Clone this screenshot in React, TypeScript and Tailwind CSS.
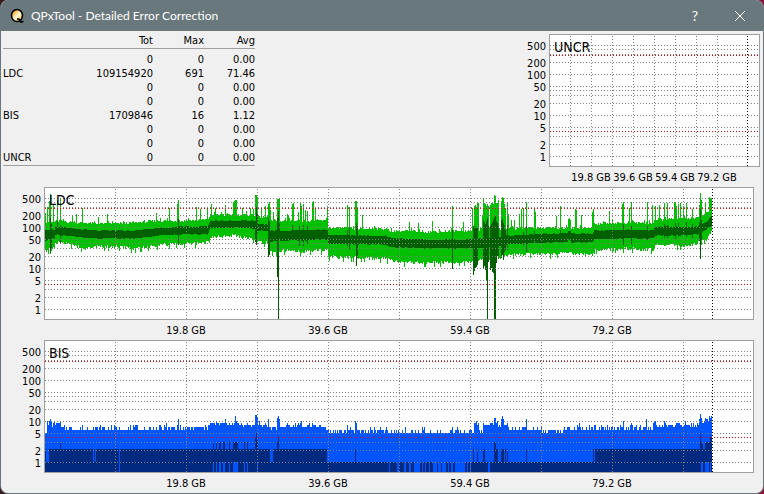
type Row = { name: string; tot: string; max: string; avg: string };

const rows: Row[] = [
  { name: "", tot: "0", max: "0", avg: "0.00" },
  { name: "LDC", tot: "109154920", max: "691", avg: "71.46" },
  { name: "", tot: "0", max: "0", avg: "0.00" },
  { name: "", tot: "0", max: "0", avg: "0.00" },
  { name: "BIS", tot: "1709846", max: "16", avg: "1.12" },
  { name: "", tot: "0", max: "0", avg: "0.00" },
  { name: "", tot: "0", max: "0", avg: "0.00" },
  { name: "UNCR", tot: "0", max: "0", avg: "0.00" },
];

const H = 131;
const SAMPLES = 667;

// one decade is 41px high
const yOf = (v: number) => Math.round(121 - 41 * Math.log10(v));

const gridValues = [500, 400, 300, 200, 100, 50, 40, 30, 20, 10, 5, 3, 2, 1];
const labels = [500, 200, 100, 50, 20, 10, 5, 2, 1];
const sizes = ["19.8 GB", "39.6 GB", "59.4 GB", "79.2 GB"];

// small repeatable noise, 0..1
const noise = (x: number, seed: number) => {
  const n = Math.sin(x * 12.9898 + seed * 78.233) * 43758.5453;
  return n - Math.floor(n);
};

// x, max top, min bottom, avg top, avg bottom
const ldcBase = [
  [0, 34, 62, 42, 52],
  [9, 34, 60, 42, 50],
  [10, 33, 54, 39, 47],
  [22, 34, 54, 40, 47],
  [38, 35, 60, 42, 49],
  [55, 36, 58, 43, 50],
  [72, 36, 58, 43, 50],
  [88, 35, 60, 43, 50],
  [98, 34, 59, 42, 49],
  [115, 33, 56, 40, 47],
  [138, 33, 55, 39, 46],
  [162, 32, 54, 39, 46],
  [165, 27, 48, 33, 40],
  [188, 27, 47, 33, 39],
  [208, 27, 50, 33, 40],
  [213, 29, 53, 36, 42],
  [222, 30, 54, 37, 43],
  [224, 33, 63, 43, 53],
  [242, 33, 62, 43, 52],
  [258, 33, 63, 42, 52],
  [282, 33, 61, 42, 51],
  [283, 40, 68, 47, 55],
  [312, 41, 69, 48, 56],
  [340, 41, 70, 48, 56],
  [344, 43, 71, 50, 59],
  [355, 43, 74, 51, 59],
  [385, 44, 74, 52, 60],
  [423, 43, 73, 52, 60],
  [435, 42, 72, 51, 60],
  [463, 41, 67, 48, 56],
  [482, 40, 65, 47, 55],
  [502, 40, 66, 46, 54],
  [519, 40, 64, 46, 54],
  [547, 40, 66, 46, 54],
  [549, 36, 61, 43, 51],
  [579, 35, 60, 42, 50],
  [608, 35, 61, 43, 50],
  [610, 32, 56, 39, 47],
  [636, 31, 57, 39, 47],
  [652, 30, 55, 39, 46],
  [656, 28, 52, 37, 45],
  [662, 25, 50, 33, 40],
  [667, 22, 42, 28, 37],
];

// x, top
const ldcPeaks = [
  [0, 25], [2, 19], [4, 13], [5, 6], [8, 17], [12, 12], [15, 10], [27, 27], [31, 26],
  [37, 20], [53, 29], [62, 26], [111, 25], [124, 20], [132, 16], [133, 12], [151, 19],
  [155, 21], [162, 19], [166, 16], [170, 20], [176, 24], [180, 17], [188, 14], [189, 13],
  [190, 12], [191, 12], [197, 20], [201, 23], [205, 20], [208, 21], [210, 7], [211, 7],
  [212, 9], [216, 20], [220, 18], [223, 16], [224, 14], [225, 22], [228, 24], [232, 11],
  [233, 11], [234, 11], [242, 26], [243, 27], [247, 16], [248, 15], [253, 24], [255, 15],
  [256, 18], [258, 16], [260, 22], [262, 23], [267, 15], [268, 13], [270, 19], [282, 18],
  [302, 17], [304, 19], [310, 13], [311, 13], [312, 20], [317, 27], [330, 39], [364, 34],
  [373, 35], [387, 33], [407, 18], [418, 34], [427, 20], [429, 18], [430, 17], [431, 19],
  [432, 15], [433, 15], [437, 27], [438, 10], [439, 15], [440, 16], [441, 18], [442, 16],
  [443, 18], [445, 17], [446, 15], [447, 15], [448, 16], [449, 7], [450, 8], [451, 15],
  [452, 15], [453, 12], [456, 13], [457, 9], [458, 10], [459, 16], [460, 20], [462, 15],
  [463, 26], [466, 32], [469, 32], [474, 26], [476, 21], [478, 20], [481, 14], [489, 20],
  [490, 24], [511, 28], [515, 18], [523, 31], [524, 30], [525, 32], [530, 21], [531, 22],
  [536, 27], [547, 24], [548, 21], [564, 23], [577, 16], [578, 14], [584, 20], [586, 14],
  [602, 14], [607, 17], [610, 18], [614, 17], [619, 15], [622, 15], [629, 14], [630, 14],
  [631, 18], [633, 16], [635, 15], [638, 18], [641, 15], [647, 21], [654, 17], [655, 5],
  [656, 12], [660, 15], [664, 9], [665, 10], [666, 11],
];

// x, avg top, avg bottom
const ldcAvgPeaks = [
  [5, 30, 65], [6, 36, 60], [12, 33, 46], [15, 37, 55], [133, 31, 57], [210, 33, 54],
  [211, 19, 57], [212, 25, 45], [223, 30, 69], [224, 33, 67], [232, 30, 89],
  [233, 23, 131], [234, 35, 52], [247, 37, 52], [254, 38, 58], [258, 37, 58],
  [262, 38, 56], [302, 42, 58], [304, 40, 61], [311, 35, 78], [312, 38, 70],
  [407, 42, 81], [428, 38, 87], [429, 38, 83], [430, 40, 80], [431, 40, 79],
  [432, 40, 77], [438, 32, 80], [439, 34, 78], [440, 36, 82], [441, 33, 92],
  [442, 30, 131], [443, 38, 74], [445, 38, 82], [446, 36, 80], [447, 34, 84],
  [448, 31, 85], [449, 29, 131], [450, 28, 131], [451, 33, 75], [452, 35, 68],
  [453, 38, 70], [456, 32, 70], [457, 31, 67], [458, 35, 72], [459, 37, 64],
  [460, 42, 62], [462, 37, 62], [478, 44, 58], [481, 38, 64], [489, 43, 53],
  [515, 42, 54], [523, 43, 51], [524, 43, 52], [525, 43, 53], [578, 36, 57],
  [586, 38, 56], [602, 38, 52], [619, 36, 50], [622, 37, 50], [630, 35, 51],
  [633, 35, 49], [641, 34, 49], [647, 36, 50], [654, 35, 53], [655, 21, 71],
  [656, 32, 52],
];

const rect = (x: number, top: number, bottom: number) =>
  `M${x} ${top}h1V${bottom}h-1z`;

const buildLdc = () => {
  let light = "";
  let dark = "";
  const peaks = new Map(ldcPeaks.map(([x, y]) => [x, y]));
  const avgs = new Map(ldcAvgPeaks.map(([x, a, b]) => [x, [a, b]]));
  let k = 0;
  for (let x = 0; x < SAMPLES; x++) {
    while (ldcBase[k + 1][0] < x) k++;
    const p = ldcBase[k];
    const q = ldcBase[k + 1];
    const t = (x - p[0]) / (q[0] - p[0]);
    const at = (i: number) => p[i] + (q[i] - p[i]) * t;
    const up = noise(x, 1) > 0.95 ? 4 : noise(x, 2) * 2.6;
    const down = noise(x, 3) > 0.9 ? 5 : noise(x, 4) * 3.4 - 1;
    const top = peaks.get(x) ?? Math.round(at(1) + 1 - up);
    const avg = avgs.get(x) ?? [
      Math.round(at(3) - noise(x >> 1, 5) * 0.8),
      Math.round(at(4) + noise(x >> 1, 6) * 0.8),
    ];
    light += rect(x, top, Math.round(at(2) + down));
    dark += rect(x, avg[0], avg[1]);
  }
  return { light, dark };
};

// from x, usual value
const bisBase = [
  [0, 6], [3, 8], [16, 6.8], [22, 6.4], [75, 6.2], [115, 6.3], [145, 6.8], [163, 8.6],
  [197, 8], [212, 7.8], [222, 6.8], [240, 7.3], [276, 6.7], [283, 5.4], [300, 5.6],
  [343, 5.3], [365, 5.2], [425, 5.9], [430, 8], [434, 5.9], [438, 8.2], [445, 9],
  [453, 7], [463, 6.3], [497, 5.7], [523, 6.2], [575, 6.6], [608, 7.5], [648, 7.6],
  [652, 8.8], [660, 10.2],
];

const bisPeaks = [
  [2, 10], [4, 10], [5, 11], [6, 10], [12, 9], [13, 9], [15, 10], [91, 8], [121, 9],
  [132, 8], [133, 11], [171, 10], [180, 11], [190, 13], [191, 10], [210, 14], [211, 14],
  [212, 12], [214, 10], [223, 11], [232, 12], [233, 13], [234, 11], [242, 9], [255, 9],
  [256, 10], [267, 9], [302, 8], [310, 10], [311, 9], [407, 7], [429, 9], [430, 9],
  [449, 12], [450, 12], [456, 11], [457, 13], [458, 11], [462, 9], [481, 11],
  [534, 9], [578, 10], [586, 9], [601, 11], [609, 10], [610, 10], [619, 10], [640, 10],
  [654, 11], [655, 15], [656, 12], [660, 12], [664, 13], [665, 12], [666, 13],
];

// columns where the average reaches 3 and above
const bisHigh = [
  [15, 101], [168, 101], [171, 101], [174, 101], [175, 101], [178, 101], [179, 101],
  [184, 101], [188, 101], [189, 101], [190, 101], [191, 101], [192, 101], [199, 101],
  [202, 101], [210, 97], [211, 92], [212, 99], [232, 101], [233, 96], [310, 108],
  [428, 108], [432, 108], [438, 108], [439, 108], [449, 101], [450, 101], [451, 108],
  [452, 108], [456, 108], [457, 108], [458, 108], [460, 108], [462, 108], [481, 108],
  [655, 92], [656, 101], [657, 103], [660, 101], [661, 101], [662, 101], [663, 101],
  [664, 101], [665, 96], [666, 97],
];

// x, y, width, height of gaps in the average bars
const bisGaps = [
  [1, 108, 3, 13], [48, 108, 1, 13], [50, 108, 1, 13], [74, 108, 1, 23],
  [168, 121, 1, 10], [171, 121, 1, 10], [174, 121, 2, 10], [178, 121, 2, 10],
  [184, 121, 1, 10], [188, 121, 5, 10], [199, 121, 1, 10], [202, 121, 1, 10],
  [212, 121, 1, 10], [225, 108, 3, 13], [344, 121, 1, 10], [352, 121, 2, 10],
  [359, 121, 2, 10], [364, 121, 2, 10], [369, 121, 6, 10], [377, 121, 1, 10],
  [380, 121, 1, 10], [384, 121, 1, 10], [388, 121, 4, 10], [393, 121, 3, 10],
  [397, 121, 4, 10], [403, 121, 1, 10], [406, 121, 2, 10], [410, 121, 10, 10],
  [422, 121, 1, 10], [425, 121, 1, 10], [443, 121, 2, 10], [549, 108, 1, 13],
  [656, 121, 2, 10], [660, 121, 4, 10], [665, 121, 1, 10],
];

const buildBis = () => {
  let light = "";
  let dark = "";
  const peaks = new Map(bisPeaks.map(([x, v]) => [x, v]));
  const high = new Map(bisHigh.map(([x, y]) => [x, y]));
  let k = 0;
  for (let x = 0; x < SAMPLES; x++) {
    while (k < bisBase.length - 1 && bisBase[k + 1][0] <= x) k++;
    const n = noise(x, 7);
    const jump = n > 0.93 ? 1.6 : n * 1.5 - 0.7;
    const v = peaks.get(x) ?? Math.max(4, Math.round(bisBase[k][1] + jump));
    light += rect(x, yOf(v), H);
    dark += rect(x, high.get(x) ?? (x < 282 || x >= 548 ? 108 : 121), H);
  }
  const gaps = bisGaps.map(([x, y, w, h]) => `M${x} ${y}h${w}v${h}h-${w}z`).join("");
  return { light, dark, gaps };
};

const ldc = buildLdc();
const bis = buildBis();

type PlotProps = {
  title: string;
  width: number;
  first: number;
  step: number;
  count: number;
  end: number;
  children?: React.ReactNode;
};

const Plot = ({ title, width, first, step, count, end, children }: PlotProps) => {
  return (
    <div className="relative border border-[#a0a0a0] bg-white">
      <svg
        viewBox={`0 0 ${width} ${H}`}
        preserveAspectRatio="none"
        shapeRendering="crispEdges"
        className="block h-[131px] w-full"
        role="img"
        aria-label={title}
      >
        {children}
        <g stroke="#808080" strokeDasharray="1 2">
          {gridValues.map((v) => (
            <path key={v} d={`M0 ${yOf(v) + 0.5}H${width}`} />
          ))}
          {Array.from({ length: count }, (_, i) => (
            <path key={i} d={`M${first + i * step + 0.5} 1V${H}`} />
          ))}
        </g>
        <path d={`M0 20.5H${width}M0 96.5H${width}`} stroke="#f00000" strokeDasharray="1 2" />
        <path d={`M${end + 0.5} 1V${H}`} stroke="#000" strokeDasharray="1 2" />
      </svg>
      <span className="absolute top-1 left-1 text-sm leading-4">{title}</span>
    </div>
  );
};

const Scale = () => {
  return (
    <div className="relative h-[133px] w-6 shrink-0">
      {labels.map((v) => (
        <span
          key={v}
          className="absolute right-0 -translate-y-1/2 leading-3"
          style={{ top: yOf(v) + 3 }}
        >
          {v}
        </span>
      ))}
    </div>
  );
};

const Sizes = ({ className }: { className: string }) => {
  return (
    <div className={`mt-[5px] grid leading-3 ${className}`}>
      {sizes.map((s) => (
        <span key={s} className="text-center whitespace-nowrap">
          {s}
        </span>
      ))}
    </div>
  );
};

const Chart = ({ title, children }: { title: string; children: React.ReactNode }) => {
  return (
    <section className="flex gap-[3px] pr-[9px] pl-4">
      <Scale />
      <div className="min-w-0 flex-1">
        <Plot title={title} width={708} first={70} step={71} count={9} end={667}>
          {children}
        </Plot>
        <Sizes className="grid-cols-4 px-[10%]" />
      </div>
    </section>
  );
};

const App = () => {
  return (
    <div className="min-h-screen bg-[linear-gradient(90deg,#3a1a1c_50%,#8a1538_50%)]">
      <main className="flex min-h-screen flex-col overflow-hidden rounded-lg border border-t-0 border-[#69787c] bg-[#f0f0f0] font-['DejaVu_Sans_Condensed','DejaVu_Sans',sans-serif] text-[11px] text-black">
        <header className="flex h-[31px] shrink-0 items-center bg-[#69787c] pl-2 font-[Lato,sans-serif] text-xs text-white">
          <svg viewBox="0 0 16 16" className="size-4" aria-hidden="true">
            <defs>
              <linearGradient id="disc" x1="0" y1="0" x2="1" y2="1">
                <stop offset="0" stopColor="#e87800" />
                <stop offset="0.3" stopColor="#ffc860" />
                <stop offset="0.55" stopColor="#fffbe0" />
                <stop offset="1" stopColor="#f0a000" />
              </linearGradient>
            </defs>
            <ellipse cx="8" cy="7.5" rx="5.5" ry="6" fill="url(#disc)" stroke="#000" strokeWidth="1.6" />
            <path d="M8 10.8l2 .4 2 2.8 2.5-.5" fill="none" stroke="#000" strokeWidth="1.6" />
          </svg>
          <h1 className="ml-1.5 flex-1">QPxTool - Detailed Error Correction</h1>
          <button type="button" aria-label="Help" className="h-full w-11 text-sm">
            ?
          </button>
          <button type="button" aria-label="Close" className="flex h-full w-[46px] items-center justify-center">
            <svg viewBox="0 0 10 10" className="size-2.5" aria-hidden="true">
              <path d="M0 0L10 10M10 0L0 10" stroke="#fff" />
            </svg>
          </button>
        </header>

        <div className="flex items-start justify-between pt-[3px] pr-[3px] pl-0.5">
          <table className="w-[252px] table-fixed border-b border-[#a0a0a0] text-right leading-[14px]">
            <thead className="border-b border-[#a0a0a0]">
              <tr>
                <th className="w-[60px]" />
                <th className="font-normal">Tot</th>
                <th className="w-[51px] font-normal">Max</th>
                <th className="w-[51px] font-normal">Avg</th>
              </tr>
            </thead>
            <tbody className="before:block before:h-1">
              {rows.map((r, i) => (
                <tr key={i}>
                  <th className="text-left font-normal">{r.name}</th>
                  <td>{r.tot}</td>
                  <td>{r.max}</td>
                  <td>{r.avg}</td>
                </tr>
              ))}
            </tbody>
          </table>

          <section className="flex gap-[3px]">
            <Scale />
            <div className="w-[211px]">
              <Plot title="UNCR" width={209} first={20} step={21} count={8} end={197} />
              <Sizes className="grid-cols-[repeat(4,42px)] pl-[21px]" />
            </div>
          </section>
        </div>

        <div className="mt-[3px] flex flex-col gap-[3px]">
          <Chart title="LDC">
            <path d={ldc.light} fill="#00c000" />
            <path d={ldc.dark} fill="#006000" />
          </Chart>
          <Chart title="BIS">
            <path d={bis.light} fill="#0055ff" />
            <path d={bis.dark} fill="#002a80" />
            <path d={bis.gaps} fill="#0055ff" />
          </Chart>
        </div>
      </main>
    </div>
  );
};

export default App;
